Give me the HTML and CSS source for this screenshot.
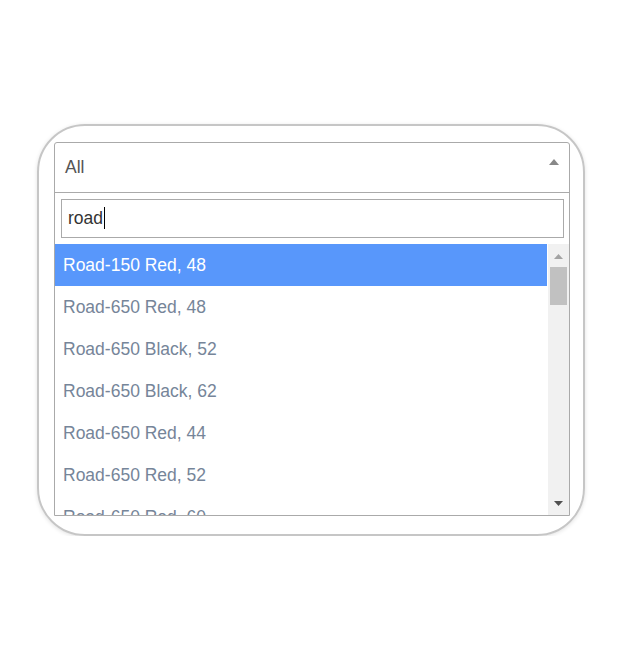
FILE: index.html
```html
<!DOCTYPE html>
<html>

<head>
    <title>Select</title>
    <link rel="stylesheet" href="styles.css">
</head>

<body>
    <div class="frame">
        <div class="select-box">
            <!-- 选中项 -->
            <div class="selection">
                <span class="selection-text">All</span>
                <svg class="selection-arrow" width="10" height="6" viewBox="0 0 10 6">
                    <path d="M0 6 L5 0 L10 6 Z" fill="#888"></path>
                </svg>
            </div>
            <!-- 搜索框 -->
            <div class="search">
                <div class="search-field">road<span class="caret"></span></div>
            </div>
            <!-- 结果列表 -->
            <div class="results">
                <ul class="result-list">
                    <li class="result highlighted">Road-150 Red, 48</li>
                    <li class="result">Road-650 Red, 48</li>
                    <li class="result">Road-650 Black, 52</li>
                    <li class="result">Road-650 Black, 62</li>
                    <li class="result">Road-650 Red, 44</li>
                    <li class="result">Road-650 Red, 52</li>
                    <li class="result">Road-650 Red, 60</li>
                </ul>
                <div class="scrollbar">
                    <svg class="scroll-arrow" width="9" height="5" viewBox="0 0 9 5">
                        <path d="M0 5 L4.5 0 L9 5 Z" fill="#a3a3a3"></path>
                    </svg>
                    <div class="scroll-track">
                        <div class="scroll-thumb"></div>
                    </div>
                    <svg class="scroll-arrow" width="9" height="5" viewBox="0 0 9 5">
                        <path d="M0 0 L4.5 5 L9 0 Z" fill="#505050"></path>
                    </svg>
                </div>
            </div>
        </div>
    </div>
</body>

</html>
```

FILE: styles.css
```css
html,
body {
    margin: 0;
    background: #fff;
    font-family: "Liberation Sans", Arial, sans-serif;
}

/* 外框 */
.frame {
    box-sizing: border-box;
    width: 548px;
    height: 412px;
    margin: 124px 0 0 37px;
    padding: 16px 13px 0 15px;
    border: 2px solid #c6c6c6;
    border-radius: 48px;
    box-shadow: 0 1px 4px rgba(0, 0, 0, 0.12);
}

.select-box {
    width: 516px;
    border: 1px solid #aaa;
    border-radius: 3px 3px 0 0;
    box-sizing: border-box;
}

.selection {
    display: flex;
    align-items: center;
    justify-content: space-between;
    height: 49px;
    padding: 0 10px 0 10px;
    border-bottom: 1px solid #aaa;
}

.selection-text {
    font-size: 17.5px;
    color: #555;
}

.selection-arrow {
    margin-top: -12px;
}

.search {
    padding: 6px 5px 6px 6px;
}

.search-field {
    box-sizing: border-box;
    height: 39px;
    border: 1px solid #aaa;
    padding: 0 6px;
    font-size: 17.5px;
    line-height: 37px;
    color: #333;
}

.caret {
    display: inline-block;
    width: 1px;
    height: 22px;
    margin-left: 1px;
    background: #000;
    vertical-align: -5px;
}

.results {
    display: flex;
    height: 271px;
    overflow: hidden;
}

.result-list {
    flex: 1;
    margin: 0;
    padding: 0;
    list-style: none;
}

.result {
    height: 42px;
    line-height: 42px;
    padding-left: 8px;
    font-size: 17.5px;
    color: #768599;
    white-space: nowrap;
}

.result.highlighted {
    background: #5897fb;
    color: #fff;
}

.scrollbar {
    width: 21px;
    margin-left: 1px;
    background: #f1f1f1;
    display: flex;
    flex-direction: column;
    align-items: center;
}

.scroll-arrow {
    flex: none;
    margin: 10px 0 9px;
}

.scroll-track {
    flex: 1;
    width: 100%;
    margin-top: -1px;
}

.scroll-thumb {
    height: 38px;
    margin: 0 2px;
    background: #c1c1c1;
}
```
